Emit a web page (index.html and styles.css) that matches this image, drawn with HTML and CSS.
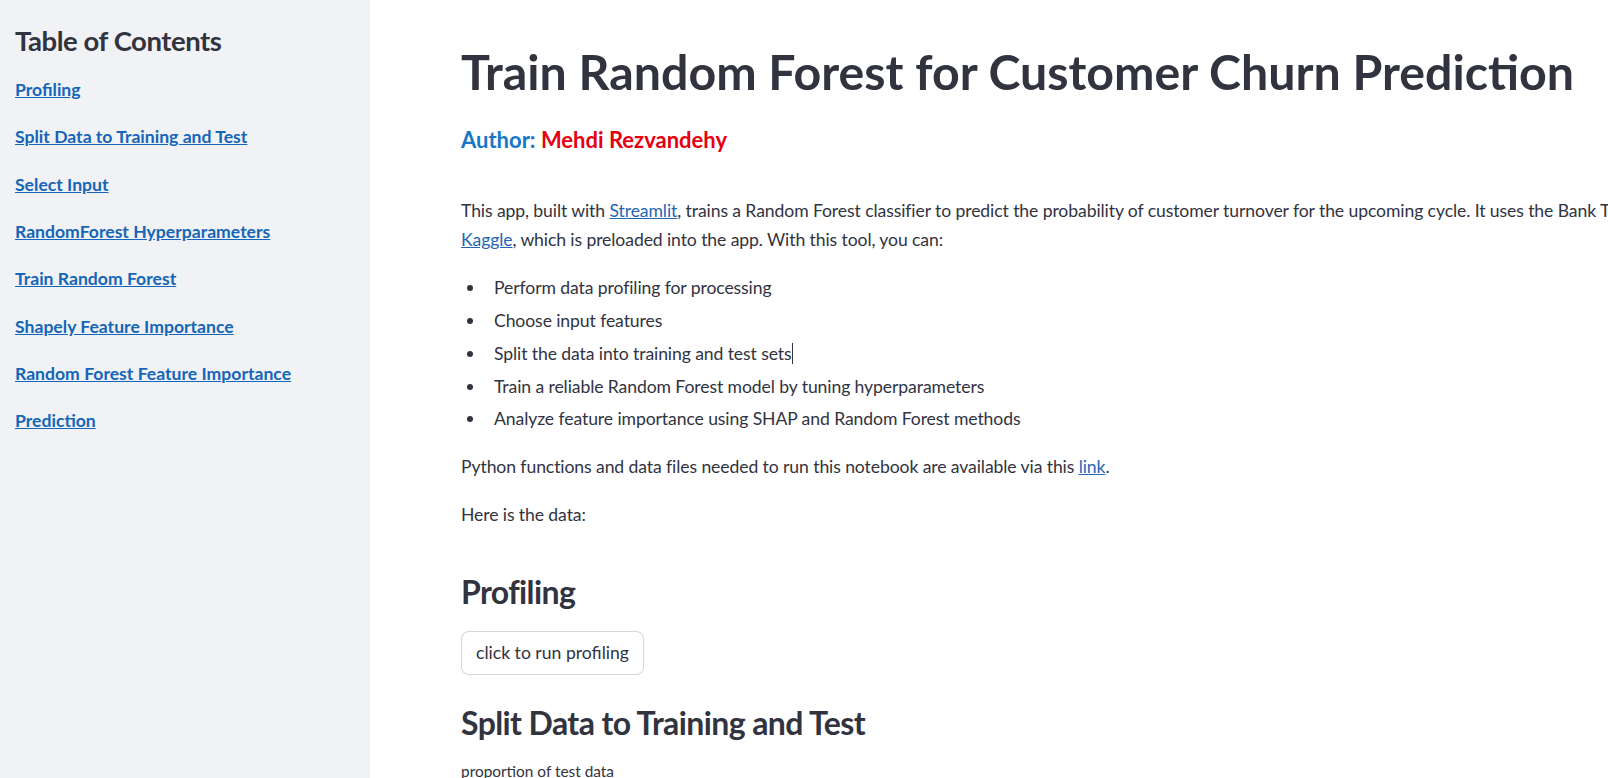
FILE: index.html
```html
<!DOCTYPE html>
<html lang="en">
<head>
<meta charset="utf-8">
<title>Train Random Forest for Customer Churn Prediction</title>
<link rel="stylesheet" href="styles.css">
</head>
<body>
<aside class="sidebar">
  <h3 class="toc-title">Table of Contents</h3>
  <nav class="toc">
    <a class="toc-link" href="#profiling">Profiling</a>
    <a class="toc-link" href="#split">Split Data to Training and Test</a>
    <a class="toc-link" href="#select">Select Input</a>
    <a class="toc-link" href="#hyper">RandomForest Hyperparameters</a>
    <a class="toc-link" href="#train">Train Random Forest</a>
    <a class="toc-link" href="#shap">Shapely Feature Importance</a>
    <a class="toc-link" href="#rffi">Random Forest Feature Importance</a>
    <a class="toc-link" href="#pred">Prediction</a>
  </nav>
</aside>
<main class="main">
  <h1 class="title">Train Random Forest for Customer Churn Prediction</h1>
  <p class="author"><span class="author-label">Author:</span> <span class="author-name">Mehdi Rezvandehy</span></p>
  <p class="text intro">This app, built with <a class="link" href="#">Streamlit</a>, trains a Random Forest classifier to predict the probability of customer turnover for the upcoming cycle. It uses the Bank Turnover Dataset from<br><a class="link" href="#">Kaggle</a>, which is preloaded into the app. With this tool, you can:</p>
  <ul class="bullets">
    <li>Perform data profiling for processing</li>
    <li>Choose input features</li>
    <li>Split the data into training and test sets<span class="caret"></span></li>
    <li>Train a reliable Random Forest model by tuning hyperparameters</li>
    <li>Analyze feature importance using SHAP and Random Forest methods</li>
  </ul>
  <p class="text">Python functions and data files needed to run this notebook are available via this <a class="link" href="#">link</a>.</p>
  <p class="text">Here is the data:</p>
  <h2 class="section" id="profiling">Profiling</h2>
  <button class="btn" type="button">click to run profiling</button>
  <h2 class="section section-split" id="split">Split Data to Training and Test</h2>
  <p class="label">proportion of test data</p>
</main>
</body>
</html>
```
FILE: styles.css
```css
html, body {
  margin: 0;
  padding: 0;
}
body {
  width: 1608px;
  height: 778px;
  overflow: hidden;
  display: flex;
  font-family: Lato, "Noto Sans", sans-serif;
  color: #31333f;
  background: #ffffff;
}
.sidebar {
  flex: 0 0 370px;
  box-sizing: border-box;
  background: #f0f2f6;
  padding: 24px 0 0 15px;
}
.toc-title {
  margin: 0 0 19px 0;
  font-size: 27.5px;
  line-height: 1.2;
  font-weight: 700;
  letter-spacing: -0.45px;
  color: #31333f;
}
.toc {
  display: flex;
  flex-direction: column;
  align-items: flex-start;
  gap: 19.2px;
}
.toc-link {
  font-size: 17.6px;
  line-height: 28.16px;
  font-weight: 700;
  color: #1565b8;
  text-decoration: underline;
}
.main {
  flex: 1 1 auto;
  min-width: 0;
  overflow: hidden;
  padding: 43px 0 0 91px;
  white-space: nowrap;
}
.title {
  margin: 0;
  font-size: 48.3px;
  line-height: 1.2;
  font-weight: 700;
  color: #31333f;
}
.author {
  margin: 26px 0 0 0;
  font-size: 22px;
  line-height: 1.2;
  font-weight: 700;
}
.author-label { color: #1677c8; }
.author-name { color: #e60012; }
.text {
  margin: 18.8px 0 0 0;
  font-size: 17.6px;
  line-height: 29px;
  letter-spacing: -0.1px;
}
.text.intro { margin-top: 43px; }
.link { color: #2566b4; }
.bullets {
  margin: 18.8px 0 0 0;
  padding: 0 0 0 33px;
  font-size: 17.6px;
  line-height: 29px;
  letter-spacing: -0.1px;
  list-style: none;
}
.bullets li {
  position: relative;
  margin-bottom: 3.8px;
}
.bullets li:last-child { margin-bottom: 0; }
.bullets li::before {
  content: "";
  position: absolute;
  left: -27px;
  top: 12px;
  width: 6px;
  height: 6px;
  border-radius: 50%;
  background: #31333f;
}
.caret {
  display: inline-block;
  width: 1px;
  height: 21px;
  background: #31333f;
  vertical-align: -4px;
}
.section {
  margin: 44px 0 0 0;
  font-size: 32px;
  line-height: 1.2;
  font-weight: 700;
  letter-spacing: -0.6px;
  color: #31333f;
}
.btn {
  display: block;
  margin-top: 19.5px;
  height: 44px;
  padding: 0 14px;
  box-sizing: border-box;
  border: 1px solid rgba(49, 51, 63, 0.2);
  border-radius: 8px;
  background: #ffffff;
  font-family: inherit;
  font-size: 17.6px;
  color: #31333f;
}
.section-split { margin-top: 29px; }
.label {
  margin: 17px 0 0 0;
  font-size: 15.4px;
  line-height: 24.6px;
}
```
